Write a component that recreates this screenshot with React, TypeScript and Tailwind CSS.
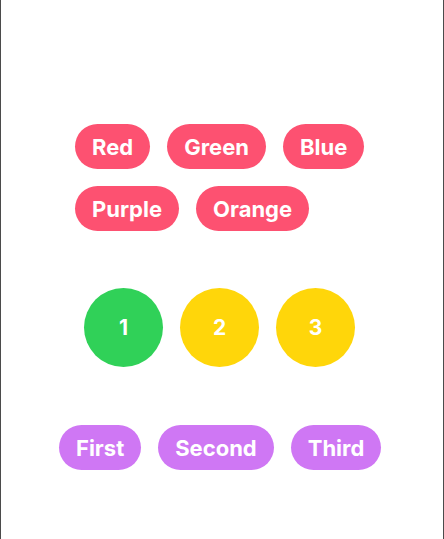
const colors = ["Red", "Green", "Blue", "Purple", "Orange"];
const numbers = [
  {label: "1", bg: "bg-[#30d158]"},
  {label: "2", bg: "bg-[#ffd60a]"},
  {label: "3", bg: "bg-[#ffd60a]"},
];
const ranks = ["First", "Second", "Third"];

const Pill = ({label, bg}: {label: string; bg: string}) => (
  <div
    className={`${bg} h-[45px] px-[17px] rounded-full flex items-center justify-center text-white text-[22px] font-bold leading-none`}>
    {label}
  </div>
);

export default function App() {
  return (
    <div
      className="min-h-[539px] bg-white border-x border-[#4b4b4b] pt-[124px]"
      style={{fontFamily: "Inter, 'Noto Sans', sans-serif"}}>
      <div className="ml-[74px] w-[292px] flex flex-wrap gap-[17px]">
        {colors.map((c) => (
          <Pill key={c} label={c} bg="bg-[#fd5171]" />
        ))}
      </div>

      <div className="ml-[83px] mt-[57px] flex gap-[17px]">
        {numbers.map((n) => (
          <div
            key={n.label}
            className={`${n.bg} w-[79px] h-[79px] rounded-full flex items-center justify-center text-white text-[21px] font-bold`}>
            {n.label}
          </div>
        ))}
      </div>

      <div className="ml-[58px] mt-[58px] flex gap-[17px]">
        {ranks.map((r) => (
          <Pill key={r} label={r} bg="bg-[#cf77f4]" />
        ))}
      </div>
    </div>
  );
}
